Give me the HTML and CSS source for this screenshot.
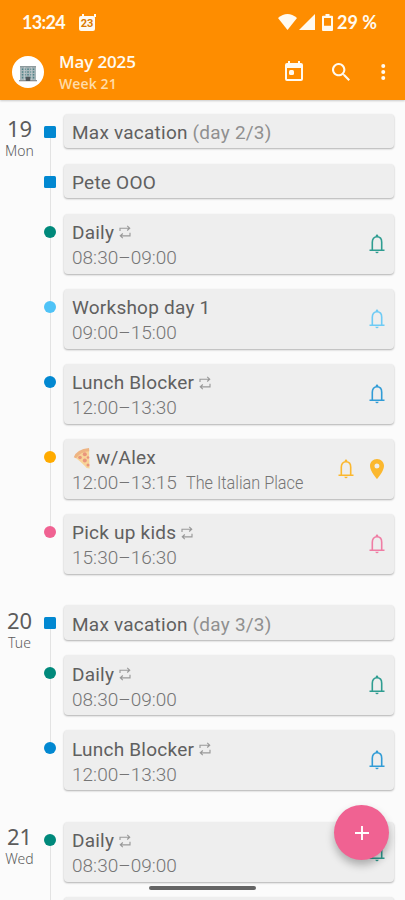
FILE: index.html
```html
<!DOCTYPE html>
<html lang="en">
<head>
<meta charset="utf-8">
<title>Agenda</title>
<link rel="stylesheet" href="styles.css">
</head>
<body>
<svg class="defs" aria-hidden="true">
  <symbol id="repeat" viewBox="0 0 14 14"><path d="M2 6V3.2h9M9.2.9l2.5 2.3-2.5 2.3M12 7.8v3H2.8M4.8 8.500l-2.500 2.300 2.500 2.300" fill="none" stroke="currentColor" stroke-width="1.150"/></symbol>
  <symbol id="bell" viewBox="0 0 16 20"><path d="M3.300 16V8.200C3.300 5 5 2.800 8 2.800s4.700 2.200 4.700 5.400V16" fill="none" stroke="currentColor" stroke-width="1.600"/><path d="M.5 15.400h15v1.600H.5zM6.300 17.800h3.400q-.4 1.500-1.700 1.500t-1.700-1.500zM6.700 3V1.900a1.300 1.300 0 0 1 2.600 0V3z" fill="currentColor"/></symbol>
  <symbol id="pin" viewBox="5 2 14 20"><path d="M12 2C8.130 2 5 5.130 5 9c0 5.250 7 13 7 13s7-7.750 7-13c0-3.870-3.130-7-7-7zm0 9.500a2.500 2.500 0 1 1 0-5 2.500 2.500 0 0 1 0 5z" fill="currentColor" fill-rule="evenodd"/></symbol>
</svg>
<div class="screen">
  <header class="top">
    <div class="status">
      <span class="clock">13:24</span>
      <span class="date-badge"><span>23</span></span>
      <svg class="wifi" viewBox="0 0 19 16"><path d="M0 4Q9.500-3.800 19 4L9.500 16z" fill="currentColor"/></svg>
      <svg class="signal" viewBox="0 0 16 16"><path d="M16 0v16H0z" fill="currentColor"/></svg>
      <svg class="battery" viewBox="0 0 11 17"><path d="M3.500 0h4v1.800H10q1 0 1 1V16q0 1-1 1H1q-1 0-1-1V2.800q0-1 1-1h2.500zM2 4v7.700h7V4z" fill="currentColor" fill-rule="evenodd"/></svg>
      <span class="percent">29 %</span>
    </div>
    <div class="bar">
      <span class="avatar"><svg viewBox="0 0 18 17"><path d="M1 1.500h16V15H1z" fill="#a9b7ba"/><path d="M1 1h16v1.400H1z" fill="#8d9a9d"/><path d="M2.800 4.200h12.600M2.800 7h12.600M2.800 9.800h12.600M2.800 12.600h12.600" stroke="#4f8286" stroke-width="1.600" stroke-dasharray="1.500 1.250"/><path d="M5.800 2v13M12.200 2v13" stroke="#d2d8d9" stroke-width=".8"/><path d="M0 15h18v1.300H0z" fill="#8c9193"/><path d="M6.800 11.800h4.400V16H6.800z" fill="#50575b"/></svg></span>
      <div class="heading"><h1>May 2025</h1><p>Week 21</p></div>
      <svg class="today" viewBox="0 0 18 20"><path d="M3 0h2v2h8V0h2v2h1a2 2 0 0 1 2 2v14a2 2 0 0 1-2 2H2a2 2 0 0 1-2-2V4a2 2 0 0 1 2-2h1zM2 7v11h14V7z" fill="currentColor" fill-rule="evenodd"/><rect x="4" y="9" width="5" height="5" rx="1.500" fill="currentColor"/></svg>
      <svg class="search" viewBox="3 3 17.500 17.500"><path d="M15.500 14h-.79l-.28-.27A6.500 6.500 0 1 0 13.730 14.430l.27.28v.79l5 4.990L20.490 19zm-6 0a4.500 4.500 0 1 1 0-9 4.500 4.500 0 0 1 0 9z" fill="currentColor" fill-rule="evenodd"/></svg>
      <svg class="more" viewBox="0 0 4 16"><circle cx="2" cy="2" r="2" fill="currentColor"/><circle cx="2" cy="8" r="2" fill="currentColor"/><circle cx="2" cy="14" r="2" fill="currentColor"/></svg>
    </div>
  </header>
  <main class="agenda">
    <section class="day">
      <div class="label"><b>19</b><span>Mon</span></div>
      <div class="events">
        <div class="event blue allday"><i class="dot"></i><article class="card"><h2>Max vacation <em>(day 2/3)</em></h2></article></div>
        <div class="event blue allday"><i class="dot"></i><article class="card"><h2>Pete OOO</h2></article></div>
        <div class="event green"><i class="dot"></i><article class="card"><h2>Daily<svg class="repeat"><use href="#repeat"/></svg></h2><p>08:30–09:00</p><div class="icons"><svg class="bell"><use href="#bell"/></svg></div></article></div>
        <div class="event sky"><i class="dot"></i><article class="card"><h2>Workshop day 1</h2><p>09:00–15:00</p><div class="icons"><svg class="bell"><use href="#bell"/></svg></div></article></div>
        <div class="event blue"><i class="dot"></i><article class="card"><h2>Lunch Blocker<svg class="repeat"><use href="#repeat"/></svg></h2><p>12:00–13:30</p><div class="icons"><svg class="bell"><use href="#bell"/></svg></div></article></div>
        <div class="event amber"><i class="dot"></i><article class="card"><h2><svg class="pizza" viewBox="0 0 20 22"><path d="M2.500 10Q6 3.500 17 2l.6 19.500-3-.5Q11 16.500 2.500 10z" fill="#f8d498"/><path d="M1.800 10.300Q4.500 2.200 17 1l.3 3.200Q8.500 4.500 4 11.300z" fill="#eeb483"/><g fill="#e9957d"><circle cx="12.800" cy="7.300" r="2"/><circle cx="8" cy="10.500" r="1.800"/><circle cx="12.800" cy="13.500" r="2"/><circle cx="16" cy="10.500" r="1.300"/><circle cx="16" cy="18" r="1.500"/></g></svg>w/Alex</h2><p>12:00–13:15<span class="place">The Italian Place</span></p><div class="icons"><svg class="bell"><use href="#bell"/></svg><svg class="pin"><use href="#pin"/></svg></div></article></div>
        <div class="event pink"><i class="dot"></i><article class="card"><h2>Pick up kids<svg class="repeat"><use href="#repeat"/></svg></h2><p>15:30–16:30</p><div class="icons"><svg class="bell"><use href="#bell"/></svg></div></article></div>
      </div>
    </section>
    <section class="day">
      <div class="label"><b>20</b><span>Tue</span></div>
      <div class="events">
        <div class="event blue allday"><i class="dot"></i><article class="card"><h2>Max vacation <em>(day 3/3)</em></h2></article></div>
        <div class="event green"><i class="dot"></i><article class="card"><h2>Daily<svg class="repeat"><use href="#repeat"/></svg></h2><p>08:30–09:00</p><div class="icons"><svg class="bell"><use href="#bell"/></svg></div></article></div>
        <div class="event blue"><i class="dot"></i><article class="card"><h2>Lunch Blocker<svg class="repeat"><use href="#repeat"/></svg></h2><p>12:00–13:30</p><div class="icons"><svg class="bell"><use href="#bell"/></svg></div></article></div>
      </div>
    </section>
    <section class="day">
      <div class="label"><b>21</b><span>Wed</span></div>
      <div class="events">
        <div class="event green"><i class="dot"></i><article class="card"><h2>Daily<svg class="repeat"><use href="#repeat"/></svg></h2><p>08:30–09:00</p><div class="icons"><svg class="bell"><use href="#bell"/></svg></div></article></div>
        <div class="event blue"><i class="dot"></i><article class="card"></article></div>
      </div>
    </section>
  </main>
  <button class="fab" aria-label="Add"><svg viewBox="0 0 14 14"><path d="M7 0v14M0 7h14" stroke="#fff" stroke-width="1.900"/></svg></button>
  <div class="gesture"></div>
</div>
</body>
</html>
```
FILE: styles.css
```css
* { box-sizing: border-box; margin: 0; padding: 0; }
body { font-family: Roboto, sans-serif; background: #fafafa; }
.defs { position: absolute; width: 0; height: 0; }
svg { display: block; flex: none; }
.screen { position: relative; height: 900px; overflow: hidden; background: #fbfbfb; }

.top { height: 100px; background: #fe8d00; color: #fffaf0; box-shadow: 0 1px 2px rgba(0,0,0,.2); }
.status { display: flex; align-items: center; height: 44px; padding-left: 22px; font-family: Lato, sans-serif; font-weight: 700; font-size: 18px; }
.clock { width: 57px; letter-spacing: -.7px; }
.date-badge { display: grid; place-items: center; width: 16px; height: 15px; margin-top: 2px; background: #fffaf0; border-radius: 2px; color: #d97900; font: 700 11px/13px Roboto, sans-serif; position: relative; }
.date-badge::before { content: ""; position: absolute; top: -2px; left: 3px; width: 10px; height: 3px; border: solid #fffaf0; border-width: 0 2px; }
.wifi { width: 19px; height: 16px; margin-left: 183px; }
.signal { width: 16px; height: 16px; margin-left: 2px; }
.battery { width: 11px; height: 17px; margin-left: 7px; }
.percent { margin-left: 4px; white-space: nowrap; }

.bar { display: flex; align-items: center; height: 56px; padding-left: 12px; }
.avatar { display: grid; place-items: center; flex: none; width: 32px; height: 32px; border-radius: 50%; background: #fff; }
.avatar svg { width: 18px; height: 17px; margin-top: 2px; }
.heading { width: 241px; padding-left: 15px; font-family: "Open Sans", sans-serif; }
.heading h1 { font-size: 17px; line-height: 22px; font-weight: 600; letter-spacing: -.15px; }
.heading p { font-size: 14px; line-height: 21px; font-weight: 600; color: #ffdca8; letter-spacing: .1px; }
.today { width: 18px; height: 20px; margin-top: -2px; }
.search { width: 18px; height: 18px; margin-left: 29px; }
.more { width: 4.500px; height: 16px; margin-left: 31px; }

.agenda { display: flex; flex-direction: column; gap: 31.500px; padding-top: 13.700px; }
.day { display: flex; }
.label { width: 39px; padding-top: 2.300px; text-align: center; font-family: "Noto Sans", sans-serif; color: #5c5c5c; }
.label b { display: block; font-size: 22px; line-height: 24px; font-weight: 400; }
.label span { display: block; font-size: 14px; line-height: 22px; font-weight: 350; }
.events { flex: 1; display: flex; flex-direction: column; gap: 15.200px; }
.event { display: flex; height: 59.900px; position: relative; }
.event.allday { height: 34.800px; }
.event:not(:last-child)::before { content: ""; position: absolute; left: 10.500px; top: 18px; width: 1.500px; height: calc(100% + 16px); background: #e3e3e3; }
.dot { width: 12px; height: 12px; margin: 12px 8px 0 5px; border-radius: 50%; background: var(--c); position: relative; flex: none; }
.allday .dot { border-radius: 1.500px; }
.card { position: relative; flex: none; width: 330px; padding: 5.800px 8px 0; border-radius: 4px; background: #eee; box-shadow: 0 1px 2px rgba(0,0,0,.3); color: #606060; }
.card h2 { display: flex; align-items: center; height: 26px; font-size: 19px; font-weight: 450; letter-spacing: .23px; white-space: pre; }
.card em { font-style: normal; color: #909090; }
.card p { display: flex; height: 24px; align-items: center; font-size: 19px; color: #757575; font-weight: 350; letter-spacing: .02px; white-space: nowrap; }
.place { display: block; margin-left: 9px; font-weight: 300; letter-spacing: 0; transform: scaleX(.855); transform-origin: left; }
.repeat { width: 14px; height: 14px; margin-left: 3.500px; color: #999; }
.pizza { width: 20px; height: 22px; margin-right: 4px; }
.icons { position: absolute; right: 9px; top: 0; height: 100%; display: flex; align-items: center; gap: 16px; color: var(--c); opacity: .8; }
.bell { width: 16px; height: 20px; }
.pin { width: 14px; height: 20px; }
.amber .icons { right: 10px; }

.blue { --c: #0288d1; }
.green { --c: #00897b; }
.sky { --c: #4fc3f7; }
.amber { --c: #ffab00; }
.pink { --c: #f06292; }

.fab { position: absolute; left: 334px; top: 805px; width: 55px; height: 55px; border: 0; border-radius: 50%; background: #f06292; display: grid; place-items: center; box-shadow: 0 5px 9px rgba(0,0,0,.28); }
.fab svg { width: 14px; height: 14px; }
.gesture { position: absolute; left: 149px; top: 886px; width: 107px; height: 4px; border-radius: 2px; background: #646464; }
```
